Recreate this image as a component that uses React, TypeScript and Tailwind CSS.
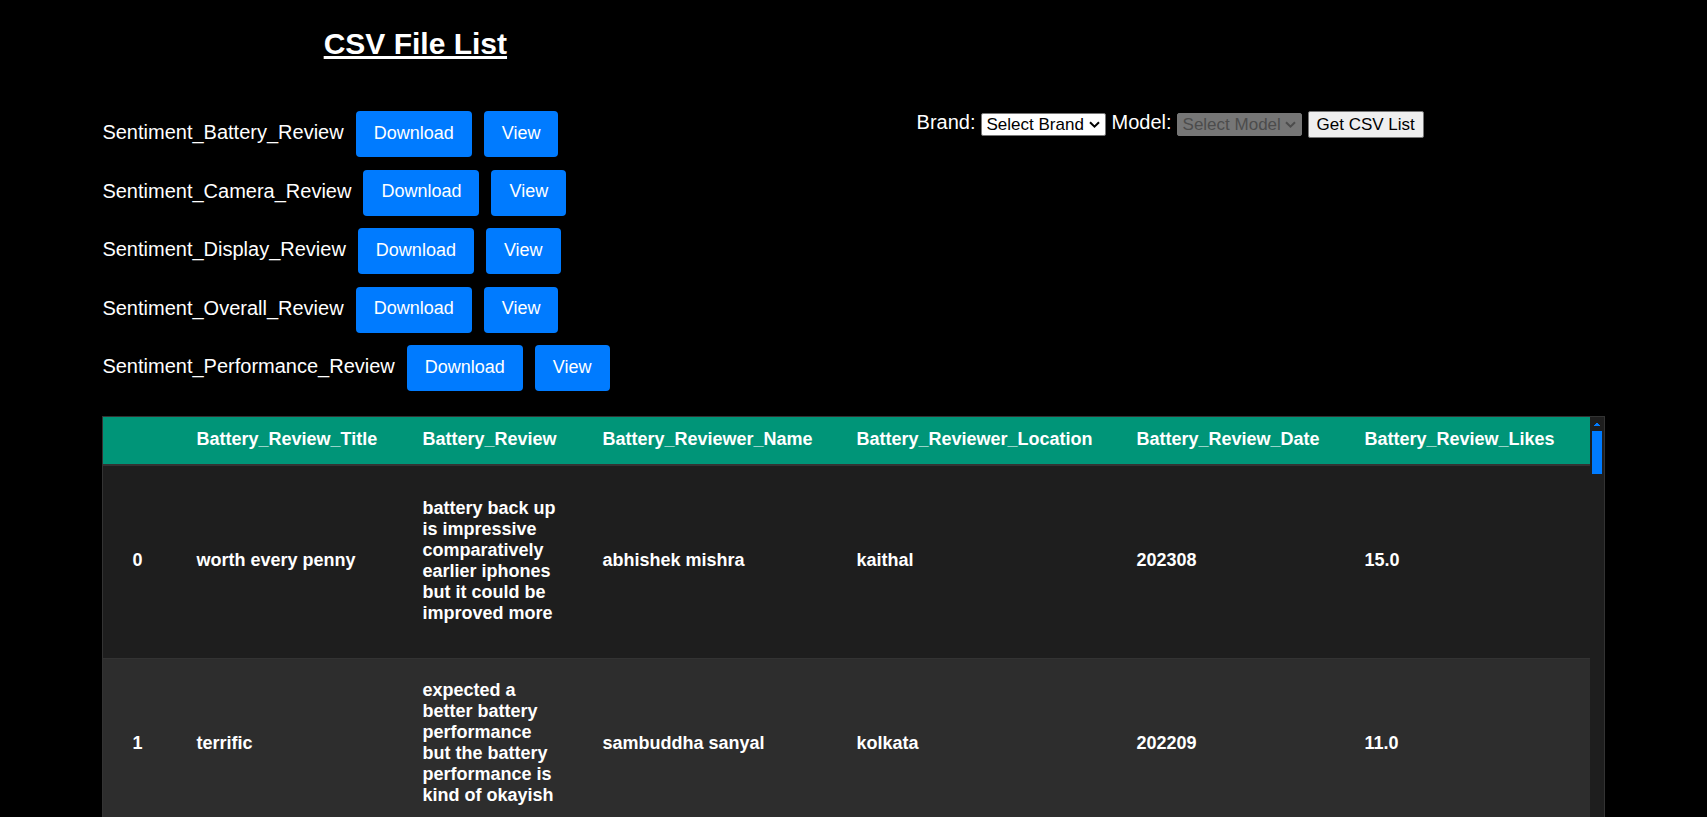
const files = [
  "Sentiment_Battery_Review",
  "Sentiment_Camera_Review",
  "Sentiment_Display_Review",
  "Sentiment_Overall_Review",
  "Sentiment_Performance_Review",
];

const columns = [
  { name: "", width: "w-[64px]" },
  { name: "Battery_Review_Title", width: "w-[226px]" },
  { name: "Battery_Review", width: "w-[180px]" },
  { name: "Battery_Reviewer_Name", width: "w-[254px]" },
  { name: "Battery_Reviewer_Location", width: "w-[280px]" },
  { name: "Battery_Review_Date", width: "w-[228px]" },
  { name: "Battery_Review_Likes", width: "w-[254px]" },
];

const rows = [
  {
    height: "h-[193px]",
    cells: [
      "0",
      "worth every penny",
      "battery back up is impressive comparatively earlier iphones but it could be improved more",
      "abhishek mishra",
      "kaithal",
      "202308",
      "15.0",
    ],
  },
  {
    height: "h-[172px]",
    cells: [
      "1",
      "terrific",
      "expected a better battery performance but the battery performance is kind of okayish",
      "sambuddha sanyal",
      "kolkata",
      "202209",
      "11.0",
    ],
  },
];

const actionClass =
  "h-[46px] rounded-sm bg-[#007bff] px-[18px] pb-[2px] text-[18px] leading-[21px] text-white cursor-pointer";

function FileRow({ name }: { name: string }) {
  return (
    <li className="flex items-center gap-3">
      <span className="pb-1">{name}</span>
      <button type="button" className={actionClass}>Download</button>
      <button type="button" className={actionClass}>View</button>
    </li>
  );
}

function Picker({ id, label, option, disabled }: { id: string; label: string; option: string; disabled?: boolean }) {
  return (
    <div className="flex items-center gap-[5px]">
      <label htmlFor={id} className="pb-[5px]">{label}</label>
      <div className="relative flex">
        <select
          id={id}
          disabled={disabled}
          className="h-[23px] w-[125px] appearance-none rounded-xs border border-[#767676] bg-white pl-[5px] text-[17px] leading-[20px] text-black disabled:bg-[#767676] disabled:text-[#4c4c4c] disabled:opacity-100"
        >
          <option>{option}</option>
        </select>
        <svg
          viewBox="0 0 11 8"
          className={`pointer-events-none absolute right-[6px] top-[8px] h-2 w-[11px] ${disabled ? "text-[#4c4c4c]" : "text-black"}`}
          fill="none"
          stroke="currentColor"
          strokeWidth="2"
        >
          <path d="M1 1.2l4.5 4.5L10 1.2" />
        </svg>
      </div>
    </div>
  );
}

export default function App() {
  return (
    <div className="h-screen overflow-hidden bg-black px-[6%] pt-6 font-['Liberation_Sans',Arial,sans-serif] text-[20px] leading-6 text-white">
      <header className="grid grid-cols-12">
        <h1 className="col-span-5 text-center text-[30px] leading-[40px] font-bold underline">CSV File List</h1>
      </header>
      <main>
        <div className="flex pt-[47px]">
          <ul className="flex h-[280px] w-[54%] flex-col justify-between">
            {files.map((name) => (
              <FileRow key={name} name={name} />
            ))}
          </ul>
          <form className="flex h-[27px] items-center gap-[6px] pl-[3px]" onSubmit={(e) => e.preventDefault()}>
            <Picker id="brand" label="Brand:" option="Select Brand" />
            <Picker id="model" label="Model:" option="Select Model" disabled />
            <button
              type="submit"
              className="h-[27px] rounded-xs border border-[#767676] bg-[#efefef] px-2 text-[17px] leading-5 text-black"
            >
              Get CSV List
            </button>
          </form>
        </div>
        <div className="mt-[25px] flex border border-[#333] bg-[#1e1e1e]">
          <table className="min-w-0 flex-1 table-fixed border-collapse text-left text-[18px] leading-[21px] font-bold">
            <thead>
              <tr className="h-12 border-b-2 border-[#333] bg-[#009578]">
                {columns.map((c) => (
                  <th key={c.name} scope="col" className={`${c.width} pb-[3px] pl-[29px]`}>
                    {c.name}
                  </th>
                ))}
              </tr>
            </thead>
            <tbody>
              {rows.map((r) => (
                <tr key={r.cells[0]} className={`${r.height} border-b border-[#333] even:bg-[#2d2d2d]`}>
                  {r.cells.map((text, i) => (
                    <td key={i} className="pb-[2px] pl-[29px] pr-4 align-middle">
                      {text}
                    </td>
                  ))}
                </tr>
              ))}
            </tbody>
          </table>
          <div className="flex w-[14px] flex-col items-center gap-[5px] pt-[6px]">
            <svg viewBox="0 0 6 3" className="h-[3px] w-[6px]" fill="#007bff" shapeRendering="crispEdges">
              <path d="M0 3V2H1V1H2V0H4V1H5V2H6V3Z" />
            </svg>
            <div className="h-[43px] w-[10px] bg-[#007bff]" />
          </div>
        </div>
      </main>
    </div>
  );
}
